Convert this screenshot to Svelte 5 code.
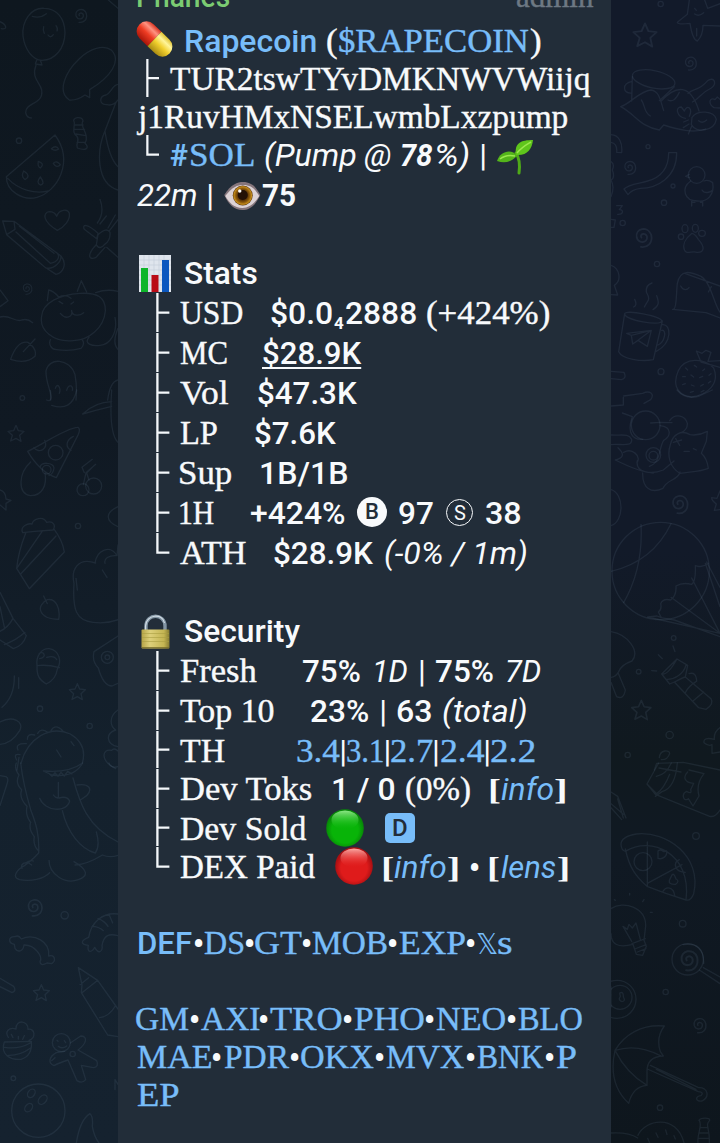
<script>
  const PANEL_LEFT = 118;
  const BASELINE = 31;

  const FACES = {
    sans: { font: '400 32px Roboto' },
    bold: { font: '500 32px Roboto' },
    heavy: { font: '700 32px Roboto' },
    ital: { font: 'italic 400 32px Roboto' },
    boldital: { font: 'italic 700 32px Roboto' },
    serif: { font: '400 33px "Liberation Serif"' },
    bracket: { font: '700 30px "Liberation Serif"' },
    sub: { font: '700 17px Roboto' },
    dot: { font: '400 28px Roboto' },
    math: { font: '400 29px "DejaVu Sans"' }
  };

  const ctx = document.createElement('canvas').getContext('2d');

  // t: text run between two ink edges, i: drawn icon box (top is relative to the baseline)
  const t = (face, text, x1, x2, tone = '') => ({ face, text, x1, x2, tone });
  const i = (icon, x1, x2, top, h) => ({ icon, x1, x2, top, h });
  const dot = (x1) => t('dot', '•', x1, x1 + 6.6);
  const tee = () => i('tee', 155.6, 169, -31, 39);
  const end = () => i('end', 155.6, 169, -31, 21);
  const L = 'link';

  const source = [
    [7, [t('bold', 'Phanes', 138, 230, 'name'), t('serif', 'admin', 517, 593, 'muted')]],
    [52, [i('pill', 136, 173, -31, 36), t('bold', 'Rapecoin', 186, 315.5, L), t('serif', '(', 327.5, 337), t('serif', '$RAPECOIN', 339, 529, L), t('serif', ')', 531, 540.5)]],
    [90, [i('tee', 146, 159, -31, 38), t('serif', 'TUR2tswTYvDMKNWVWiijq', 169.5, 589.5)]],
    [127.5, [t('serif', 'j1RuvHMxNSELwmbLxzpump', 136.5, 567.3)]],
    [166, [i('end', 146, 159, -31, 21), t('heavy', '#', 170, 188, L), t('serif', 'SOL', 191, 254, L), t('ital', '(Pump', 265, 355.3), t('ital', '@', 365, 390.7), t('boldital', '78', 401.3, 433), t('ital', '%)', 436.5, 468.7), t('sans', '|', 482, 484.5), i('sprout', 496, 534, -27, 35)]],
    [206, [t('ital', '22m', 136.6, 196), t('sans', '|', 209, 211.5), i('eye', 224, 260.5, -25, 30), t('heavy', '75', 262.5, 296.3)]],
    [284, [i('chart', 139, 171, -29, 37), t('bold', 'Stats', 185, 257.3)]],
    [324, [tee(), t('serif', 'USD', 180.3, 242.7), t('bold', '$0.0', 271.3, 332.3), t('sub', '4', 334, 344), t('bold', '2888', 345.7, 415.7), t('serif', '(+424%)', 427.3, 549.5)]],
    [364, [tee(), t('serif', 'MC', 179.7, 226.7), t('bold', '$28.9K', 263.3, 362.3, 'under')]],
    [404, [tee(), t('serif', 'Vol', 180.3, 228.7), t('bold', '$47.3K', 258.3, 357.8)]],
    [444, [tee(), t('serif', 'LP', 179.7, 217.3), t('bold', '$7.6K', 254.7, 336.3)]],
    [484, [tee(), t('serif', 'Sup', 179.7, 231.3), t('bold', '1B/1B', 260.7, 347)]],
    [524, [tee(), t('serif', '1H', 180.3, 214), t('bold', '+424%', 250.7, 344.7), i('buy', 357, 387, -27, 30), t('bold', '97', 399, 432.7), i('sell', 446.5, 473.5, -25, 27), t('bold', '38', 486.5, 521)]],
    [564, [end(), t('serif', 'ATH', 180.3, 246), t('bold', '$28.9K', 274.3, 374), t('ital', '(-0% / 1m)', 385.3, 526.3)]],
    [642, [i('lock', 140.5, 169.5, -27, 34), t('bold', 'Security', 185, 300.3)]],
    [682, [tee(), t('serif', 'Fresh', 179.7, 257), t('bold', '75%', 303, 360.3), t('ital', '1D', 375.3, 408), t('sans', '|', 420.8, 423.3), t('bold', '75%', 436.3, 493.7), t('ital', '7D', 507.3, 541.3)]],
    [722, [tee(), t('serif', 'Top 10', 179.7, 273.7), t('bold', '23%', 311, 368.7), t('sans', '|', 382, 384.5), t('bold', '63', 396.7, 431), t('ital', '(total)', 443, 525.7)]],
    [762, [i('tee', 155.6, 169, -31, 37), t('serif', 'TH', 179.7, 224), t('serif', '3.4', 297, 339.3, L), t('sans', '|', 342, 344.5), t('serif', '3.1', 347, 383, L), t('sans', '|', 386.3, 388.8), t('serif', '2.7', 391.3, 433, L), t('sans', '|', 434.8, 437.3), t('serif', '2.4', 440.7, 483.7, L), t('sans', '|', 486, 488.5), t('serif', '2.2', 491.3, 534.7, L)]],
    [800, [tee(), t('serif', 'Dev Toks', 180.3, 312.3), t('bold', '1 / 0', 333.3, 394.7), t('serif', '(0%)', 406.3, 470.3), t('bracket', '[', 490.7, 499.7), t('ital', 'info', 501.3, 553.7, L), t('bracket', ']', 555.7, 565.3)]],
    [840, [i('tee', 155.6, 169, -31, 37), t('serif', 'Dev Sold', 180.3, 307.3), i('green', 326, 364, -31.3, 38), i('dbadge', 385, 414.7, -27, 30)]],
    [878, [end(), t('serif', 'DEX Paid', 180.3, 315.7), i('red', 335.3, 373.3, -31.3, 38), t('bracket', '[', 383.7, 393), t('ital', 'info', 394.3, 446.3, L), t('bracket', ']', 448.7, 458), dot(471), t('bracket', '[', 490, 499), t('ital', 'lens', 501, 555.3, L), t('bracket', ']', 558, 567.3)]],
    [954, [t('bold', 'DEF', 138.7, 191.3, L), dot(195), t('serif', 'DS', 204, 243.7, L), dot(246), t('serif', 'GT', 254.7, 301.3, L), dot(302.8), t('serif', 'MOB', 312.3, 387.3, L), dot(389.7), t('serif', 'EXP', 399, 465.7, L), dot(467.7), t('math', '𝕏', 477, 497, L), t('serif', 's', 498, 511.3, L)]],
    [1030, [t('serif', 'GM', 136.3, 189, L), dot(191.7), t('serif', 'AXI', 201.3, 259.7, L), dot(260.7), t('serif', 'TRO', 270.3, 342, L), dot(344.7), t('serif', 'PHO', 354, 424, L), dot(426.7), t('serif', 'NEO', 436.3, 505.7, L), dot(508.7), t('serif', 'BLO', 518, 582, L)]],
    [1068, [t('serif', 'MAE', 137, 211.3, L), dot(213.7), t('serif', 'PDR', 223.7, 288.7, L), dot(291.7), t('serif', 'OKX', 300.7, 373.7, L), dot(376.7), t('serif', 'MVX', 386.3, 464.7, L), dot(467.7), t('serif', 'BNK', 477.3, 544, L), dot(546.7), t('serif', 'P', 555.7, 576.3, L)]],
    [1106, [t('serif', 'EP', 137, 179.3, L)]]
  ];

  function place(items) {
    let cursor = PANEL_LEFT;
    return items.map((item) => {
      if (item.icon) {
        const gap = item.x1 - cursor;
        cursor = item.x2;
        return { ...item, gap };
      }
      ctx.font = FACES[item.face].font;
      const m = ctx.measureText(item.text);
      const ink = m.actualBoundingBoxLeft + m.actualBoundingBoxRight;
      const fixed = item.face === 'dot' || item.text === '|';
      const scale = fixed ? 1 : Math.min(1.5, Math.max(0.85, (item.x2 - item.x1) / ink));
      const spare = item.x2 - item.x1 - ink * scale;
      const origin = item.x1 + m.actualBoundingBoxLeft * scale + spare / 2;
      const gap = origin - cursor;
      cursor = origin + m.width;
      return { ...item, scale, gap, w: m.width };
    });
  }

  const rows = source.map(([base, items], k) => ({
    h: k + 1 < source.length ? source[k + 1][0] - base : 50,
    items: place(items)
  }));

  const star = 'M0-24 L7-8 24-6 11 6 15 24 0 15 -16 23 -11 6 -24-6 -7-8Z';
  const swirl = 'M-2 2c-5-8 10-12 12-2c2 14-18 16-22 2c-4-20 24-26 31-6c4 18-8 28-22 26';
</script>

{#snippet art(name)}
  {#if name === 'tee'}
    <svg viewBox="0 0 13.4 39" preserveAspectRatio="none"><path d="M1.4 0V39M1.4 19.6H13.4" fill="none" stroke="#f4f7fa" stroke-width="2.3" /></svg>
  {:else if name === 'end'}
    <svg viewBox="0 0 13.4 21" preserveAspectRatio="none"><path d="M1.4 0V19.6H13.4" fill="none" stroke="#f4f7fa" stroke-width="2.3" /></svg>
  {:else if name === 'pill'}
    <svg viewBox="0 0 37 36">
      <defs>
        <linearGradient id="pr" x1="0" y1="1" x2="0" y2="0"><stop offset="0" stop-color="#a81509" /><stop offset=".45" stop-color="#ee3c23" /><stop offset=".75" stop-color="#ff9382" /><stop offset="1" stop-color="#d93421" /></linearGradient>
        <linearGradient id="py" x1="0" y1="1" x2="0" y2="0"><stop offset="0" stop-color="#a98b12" /><stop offset=".45" stop-color="#f1cf2d" /><stop offset=".75" stop-color="#fff59a" /><stop offset="1" stop-color="#dec02e" /></linearGradient>
      </defs>
      <g transform="translate(18.5 18) rotate(44)">
        <path d="M0-10H-11A10 10 0 0 0-11 10H0Z" fill="url(#pr)" />
        <path d="M0-10H11A10 10 0 0 1 11 10H0Z" fill="url(#py)" />
      </g>
    </svg>
  {:else if name === 'sprout'}
    <svg viewBox="0 0 38 35">
      <path d="M20 14c4 6 4 13 3 20" fill="none" stroke="#4faa18" stroke-width="3" stroke-linecap="round" />
      <path d="M20 16C18 4 25 1 37 1C36 10 31 17 20 16Z" fill="#5fc51c" />
      <path d="M21 17C16 9 4 12 1 22C10 25 16 22 21 17Z" fill="#54b51b" />
      <path d="M21 14C26 8 30 6 35 3M4 20C9 16 14 16 19 17" fill="none" stroke="#9be84e" stroke-width="1.5" />
    </svg>
  {:else if name === 'eye'}
    <svg viewBox="0 0 36 30">
      <defs><radialGradient id="iris"><stop offset=".35" stop-color="#3b1c06" /><stop offset=".7" stop-color="#8d5a0b" /><stop offset=".88" stop-color="#c28a1b" /><stop offset="1" stop-color="#4e2c09" /></radialGradient></defs>
      <path d="M0 14C7 3 13 1 19 1C27 1 32 6 36 14C31 25 25 29 18 29C10 29 4 23 0 14Z" fill="#85757b" />
      <path d="M1 15C8 6 13 4 19 4C27 4 31 8 35 15C30 23 25 27 18 27C10 27 5 22 1 15Z" fill="#dcd2d5" />
      <circle cx="18.5" cy="14.5" r="10" fill="url(#iris)" />
      <circle cx="18.5" cy="14" r="5" fill="#241006" />
      <circle cx="15.5" cy="10" r="1.7" fill="#fff" />
    </svg>
  {:else if name === 'chart'}
    <svg viewBox="0 0 32 37">
      <path d="M0 0H32V37H0Z" fill="#dfe5ed" />
      <path d="M0 5H32M0 10H32M0 15H32M0 20H32M0 25H32M0 30H32M5 0V37M10 0V37M15 0V37M20 0V37M25 0V37" stroke="#c5cfdb" stroke-width=".7" />
      <path d="M2 13H9V37H2Z" fill="#0db52a" /><path d="M12.5 20H19.5V37H12.5Z" fill="#b90a16" /><path d="M23 5H30V37H23Z" fill="#0b57bf" />
    </svg>
  {:else if name === 'lock'}
    <svg viewBox="0 0 29 34">
      <defs><linearGradient id="brass"><stop offset="0" stop-color="#b6a447" /><stop offset=".3" stop-color="#ddd07a" /><stop offset=".8" stop-color="#c4b552" /><stop offset="1" stop-color="#867b31" /></linearGradient></defs>
      <path d="M5 16V11C5-2 24-2 24 11V16" fill="none" stroke="#8294a3" stroke-width="3.4" />
      <path d="M4.5 15V11C5-1 22-2 23.5 8" fill="none" stroke="#d1dce4" stroke-width="1.2" />
      <rect x=".5" y="14.5" width="28" height="19" rx="1" fill="url(#brass)" />
      <path d="M1 18.5H28M1 22.5H28M1 26.5H28" stroke="#aa9d42" stroke-width=".6" /><path d="M1 32.8H28" stroke="#766c2b" stroke-width="1.2" />
    </svg>
  {:else if name === 'green' || name === 'red'}
    {@const g = name === 'green'}
    <svg viewBox="0 0 38 38">
      <defs>
        <radialGradient id="ball-{name}" cx=".5" cy=".55" r=".5"><stop offset=".7" stop-color={g ? '#08b408' : '#df1b1b'} /><stop offset="1" stop-color={g ? '#078907' : '#a90f12'} /></radialGradient>
        <linearGradient id="shine-{name}" x1="0" y1="0" x2="0" y2="1"><stop offset="0" stop-color={g ? '#8ce985' : '#ffaaa5'} /><stop offset="1" stop-color={g ? '#10b810' : '#e32222'} stop-opacity="0" /></linearGradient>
      </defs>
      <circle cx="19" cy="19" r="18.8" fill="url(#ball-{name})" /><ellipse cx="19" cy="11" rx="13.5" ry="9.5" fill="url(#shine-{name})" />
    </svg>
  {:else if name === 'buy'}
    <span class="badge buy">B</span>
  {:else if name === 'sell'}
    <span class="badge sell">S</span>
  {:else}
    <span class="badge dev">D</span>
  {/if}
{/snippet}

<main>
  <aside class="left">
    <svg viewBox="0 0 354 3429" class="doodles">
      <path d="M133 25C92 22 65 64 69 108C74 147 96 179 126 181C166 180 194 145 195 98C194 56 172 26 133 25ZM97 49Q120 56 139 41M131 80Q128 90 133 100M168 77Q175 86 171 93M144 105Q151 116 160 104M110 181L106 192 126 195 121 181M108 196C93 235 120 246 125 270C132 315 75 306 77 338Q80 354 94 354" />
      <path transform="translate(240 45)" d={swirl} /><path d="M208 300C170 275 196 215 238 176C270 146 310 132 335 151C365 183 332 231 269 269V293L255 285Q230 302 208 300ZM354 253C336 255 335 278 318 285C297 289 296 315 321 314Q340 319 354 300M348 307L315 392C290 450 287 550 354 570M315 394C322 440 334 481 354 500M0 65C18 72 25 90 4 86M325 0L354 25" />
      <path d="M223 367C212 352 249 346 249 363C236 378 271 402 255 430C270 444 258 454 232 444C225 430 241 424 231 409C215 399 224 383 223 367M224 375H249M224 388H254M228 402L257 407M231 427H256" />
      <path d="M165 405L19 530C19 574 69 603 111 592C171 576 224 486 165 405ZM23 535C54 568 103 583 145 573M154 446Q168 434 176 447Q165 455 154 446M115 484Q136 491 121 504Q112 500 115 484M160 490Q170 480 181 494Q169 506 160 490M71 513Q95 528 75 539Q62 530 71 513M121 531Q137 552 121 555Q107 548 121 531" />
      <circle cx="57" cy="422" r="8" /><path d="M172 691C128 665 127 638 148 635Q164 635 170 649C177 628 203 625 208 640C211 660 193 682 172 691Z" />
      <path d="M8 663L42 664 183 768C205 795 185 821 168 823L134 801 20 704ZM42 664L45 688 20 704M58 679L162 760M48 696L151 790M151 790C175 787 182 768 169 757M138 804C163 809 186 783 182 768" />
      <path d="M300 598Q315 639 292 669M319 648L300 672M346 645L324 684M294 700C263 670 245 672 253 688L290 716ZM288 735C259 766 267 782 288 772L315 742M294 704Q320 680 330 697Q332 721 314 733Q300 751 289 735ZM329 691L354 659M320 742L354 772" />
      <path transform="translate(80 865) scale(.8)" d={swirl} /><path d="M0 870L24 902 0 920M0 951C28 942 47 969 65 960Q83 955 98 968M142 902L146 870Q160 872 176 891C191 884 202 886 213 895M232 874L244 842 260 876M125 948C129 908 178 884 240 880C294 877 317 893 316 933C312 982 268 1021 220 1022C159 1028 117 990 125 948ZM287 878Q320 866 354 874M177 904L188 911M213 912L221 906M181 940C197 960 219 952 215 931M215 935C219 947 238 949 251 938M151 1019C145 1033 154 1048 169 1049Q209 1055 243 1045Q256 1031 247 1020M267 1012C250 1031 276 1039 300 1036C329 1035 354 1000 345 952M354 985Q335 1030 354 1048" />
      <path d="M32 1078Q51 1022 84 1027Q112 1046 105 1069Q77 1094 32 1078ZM70 1055L105 1017M152 1200C158 1178 137 1153 138 1113C146 1071 209 1074 225 1124Q232 1162 228 1200M166 1165C172 1145 184 1164 178 1180M200 1171C206 1150 221 1157 217 1171M323 1200Q330 1145 354 1140" />
      <g transform="translate(0 1170)">
        <path transform="translate(48 130)" d={star} /><circle cx="67" cy="24" r="7" /><path d="M140 30Q158 40 151 1M155 46Q216 66 230 0M248 72Q289 60 335 49M248 72Q286 36 335 35M335 0Q326 130 354 157" />
        <path d="M83 184C125 165 202 111 234 112Q242 118 235 133L169 263Q119 245 83 184ZM92 216C56 249 51 309 91 317C129 317 141 283 135 249M101 173C118 193 146 176 134 151M220 139C198 150 195 171 213 181M121 232C120 215 160 216 162 234Q160 251 147 257" /><circle cx="167" cy="188" r="22" /><circle cx="140" cy="239" r="13" />
        <circle cx="249" cy="299" r="18" /><circle cx="281" cy="288" r="24" /><path d="M250 284L258 248 287 223M253 248L246 232 277 208M277 232L260 249 267 270M0 300Q17 304 18 327L33 331 18 340V360L0 345" />
        <path d="M68 428C59 408 85 399 96 402C100 385 130 377 140 397C161 391 168 407 159 420L104 424ZM77 430Q55 485 50 535L88 596L193 486Q188 452 161 416M50 535L128 422M62 552L168 438" />
        <circle cx="234" cy="408" r="8" /><path d="M354 350C316 367 314 392 354 410M287 519C232 501 213 540 222 580C217 661 229 692 279 697Q320 702 354 689M285 519C291 479 331 463 351 497C326 495 311 506 315 520M307 540L321 562M351 497L354 465M228 565L232 600" />
        <path d="M131 618L142 641M176 688C182 656 168 624 142 629C108 645 113 687 176 688ZM0 607L39 685 79 737Q69 768 40 776L0 750M0 650L14 716M0 724Q25 712 39 685M13 764Q50 750 75 727" />
        <path d="M111 827C107 796 126 774 148 776C180 782 185 815 172 837Q168 868 139 882C118 870 110 857 111 827ZM111 827Q141 823 178 833M117 792C128 779 145 801 119 806M140 802Q163 795 170 809" />
        <path transform="translate(232 905)" d={star} /><circle cx="120" cy="956" r="8" /><circle cx="269" cy="1008" r="8" /><circle cx="322" cy="802" r="18" /><circle cx="322" cy="802" r="7" />
        <path d="M354 738L282 785Q275 815 295 834Q310 888 336 888L354 880M43 858Q44 920 6 952M56 863V895M0 996C38 976 74 994 59 1022Q35 1061 0 1063M354 960C328 977 328 1007 347 1020C315 1031 319 1063 354 1070M347 1136C300 1112 305 1075 335 1081Q342 1072 354 1083" />
        <path d="M63 1120C83 1043 151 1005 211 1032Q263 1063 247 1119M82 1048Q82 1029 104 1035M113 1030Q123 1012 143 1027M153 1022Q166 999 188 1022M54 1080Q44 1059 79 1061M50 1110Q39 1089 60 1094M170 1080L183 1101M213 1055L222 1067M51 1140L57 1102" />
      </g>
      <g transform="translate(0 2289)">
        <path d="M62 0Q69 61 92 140C102 169 119 203 116 270Q92 297 58 318Q34 343 59 350C93 356 131 348 149 329M49 0Q42 15 57 36Q44 60 65 80Q56 105 81 130Q75 155 92 178Q85 199 103 221Q98 245 115 263M66 316C60 303 78 291 95 306M76 300Q90 290 100 294M147 292C147 335 197 365 235 350C270 338 259 318 222 296M248 0Q223 45 156 36L130 24Q205 31 248 0M146 31L156 40 165 29 174 40 183 28 193 39 203 25 216 33M175 58V103M119 106C134 145 200 151 209 114Q201 98 177 105M160 96Q165 104 174 105M219 45C239 120 261 191 354 237M187 143C202 207 241 258 286 270Q301 249 289 207M231 66C266 60 280 77 260 98L241 111M225 306Q262 304 307 276Q329 285 354 277M327 0Q333 17 354 11M0 38L18 41Q28 45 20 66L0 128" />
        <path transform="translate(101 431) scale(1.25)" d={swirl} /><circle cx="194" cy="457" r="11" />
        <path d="M43 544C23 540 25 519 45 521Q56 515 64 528C103 510 151 536 146 579C165 573 169 593 155 602L141 600Q121 611 120 596C129 584 107 545 72 546C70 565 53 570 45 556Z" />
        <path d="M354 453C306 447 273 480 266 523C240 533 242 545 265 547C260 572 277 568 284 553C297 576 309 565 306 548C311 518 326 510 354 518M276 490Q296 490 310 503M294 466Q315 475 324 490M327 454L338 480" />
        <path transform="translate(124 689)" d={star} /><path d="M0 646L41 670Q50 684 36 689L0 671M235 614L246 666 244 689 323 816 354 821M235 614L293 652 354 738M240 665L266 644M246 689L293 652M299 764Q327 761 346 729" />
        <path d="M25 823C13 805 27 792 48 798C47 768 86 772 84 799C105 795 109 824 87 832M13 837C0 875 31 891 63 889Q98 878 94 835ZM14 853Q55 860 91 840M24 877Q60 878 93 854M34 814L39 824M55 820V828M73 818L68 829" />
        <circle cx="184" cy="839" r="27" /><circle cx="218" cy="873" r="8" /><path d="M211 840L242 819C264 819 261 841 234 861L290 893Q298 911 280 914L244 907 257 950Q246 963 231 953L204 891Q176 900 162 908C144 901 146 882 169 869L194 865M171 832L174 835M193 833L197 839M175 850Q188 859 200 849M155 893L165 884" />
        <circle cx="40" cy="946" r="7" /><circle cx="115" cy="1043" r="80" /><ellipse cx="94" cy="991" rx="10" ry="14" transform="rotate(35 94 991)" /><ellipse cx="128" cy="1010" rx="11" ry="16" transform="rotate(40 128 1010)" /><ellipse cx="86" cy="1034" rx="10" ry="14" transform="rotate(40 86 1034)" />
        <path d="M229 1140Q240 1070 270 1052Q280 1060 277 1090Q282 1120 297 1140M345 950L354 964M345 950V980" />
      </g>
    </svg>
  </aside>

  <article>
    {#each rows as row}
      <div class="row" style="height:{row.h}px">
        {#each row.items as item}
          {#if item.icon}
            <span class="icon" style="margin-left:{item.gap}px;margin-top:{BASELINE + item.top}px;width:{item.x2 - item.x1}px;height:{item.h}px">{@render art(item.icon)}</span>
          {:else}
            <span class="run {item.face} {item.tone}" style="margin-left:{item.gap}px;width:{item.w}px;--stretch:{item.scale}">{item.text}</span>
          {/if}
        {/each}
      </div>
    {/each}
  </article>

  <aside class="right">
    <svg viewBox="0 0 327 3429" class="doodles">
      <circle cx="149" cy="12" r="8" /><path transform="translate(102 105) scale(1.45)" d={star} /><path d="M235 0L229 43 199 67Q200 74 237 70Q244 118 259 123Q276 107 276 76L327 78M281 0L290 25 327 11M251 25L256 31M251 42Q264 51 278 38M257 85V108" />
      <path transform="translate(236 188)" d={swirl} /><ellipse cx="128" cy="238" rx="65" ry="26" transform="rotate(12 128 238)" /><path d="M64 230L62 303M190 260L145 302M64 244C31 250 35 282 62 279M29 320C57 312 87 272 120 270C145 273 148 301 158 332M29 320C76 345 84 378 145 390L158 375C200 388 248 401 284 387M150 304C196 253 239 252 264 333M91 300C103 315 97 336 118 348M171 300Q190 310 205 277M231 281C246 263 262 276 290 242C311 228 318 252 301 264C270 278 263 298 244 306" />
      <path d="M243 352C260 329 309 332 316 358C310 393 255 401 241 374ZM223 355C196 350 192 320 211 321L220 333C229 311 246 325 235 349M232 360L218 366M234 372L217 383M242 379L232 402M263 362Q274 372 287 360M309 323C290 310 296 290 312 299L319 291 327 298M309 323L327 324" />
      <circle cx="111" cy="440" r="6" /><circle cx="159" cy="608" r="8" /><circle cx="186" cy="558" r="6" /><path transform="translate(54 501)" d={swirl} /><path d="M173 458H197C198 534 136 565 88 565Q61 569 51 584L39 567C53 552 84 551 110 543Q173 525 173 458M0 404C25 405 35 430 32 458L17 457Q20 431 0 427M0 485Q12 492 4 510Q13 533 0 540Q12 560 0 590" />
      <circle cx="257" cy="525" r="25" /><path d="M235 523L224 529 236 533M239 543C209 565 220 603 259 603C291 607 311 582 305 548Q291 538 279 543M273 570C280 582 298 578 305 570M242 604V618M275 604V618M242 607H252M275 607H268" />
      <path transform="translate(94 710) scale(1.4)" d={swirl} /><path d="M243 700C225 714 214 733 220 749C226 766 243 751 258 757C281 758 282 740 262 718Q253 702 243 700Z" /><ellipse cx="222" cy="686" rx="9" ry="12" /><ellipse cx="253" cy="685" rx="9" ry="12" /><ellipse cx="273" cy="700" rx="10" ry="9" /><ellipse cx="210" cy="710" rx="8" ry="8" />
      <circle cx="35" cy="669" r="8" /><circle cx="138" cy="792" r="8" /><circle cx="150" cy="1115" r="9" /><path d="M17 617H34L25 629C38 627 39 644 20 643M0 658L13 660 9 682H0M0 796C26 804 33 842 10 856L20 885 0 884M188 928C198 923 195 882 199 850C208 806 238 815 270 829C300 847 310 916 327 936M185 928L285 938 327 954M209 858C217 874 230 869 234 863M301 860L292 876M221 820L327 858" />
      <path d="M41 941L23 1055C33 1077 91 1086 127 1079L154 963M41 941C41 928 152 948 152 963C151 980 41 960 41 941ZM153 974C182 970 185 1028 136 1054M152 991C168 987 162 1026 141 1035M47 1000L121 991 109 1039 81 1021 65 1032 61 1006ZM61 1006L121 991 81 1021M100 921C111 898 120 902 106 876Q104 855 123 849M126 929C144 917 145 908 137 887M68 921Q80 915 71 898" />
      <path d="M202 1112C222 1072 279 1073 308 1104C327 1150 292 1184 241 1191C188 1184 188 1142 202 1112ZM270 1086L256 1053 273 1060 285 1051 300 1057 291 1084 327 1082M270 1086L327 1102M0 1114L39 1117Q48 1135 31 1139L0 1136" /><path d="M224 1104L230 1110M250 1096L257 1101M281 1107L275 1112M215 1130H223M240 1125L248 1131M266 1133L275 1129M294 1126L300 1121M215 1154L223 1151M241 1155L249 1158M269 1158L277 1153M292 1149L299 1144M238 1177L247 1174M270 1176L279 1171" />
      <g transform="translate(0 1170)">
        <path d="M37 22V45L0 48M38 18L95 10C116 0 132 11 119 29L99 40M198 0Q224 31 265 18L304 0M0 135C33 137 52 129 62 148C64 173 26 160 0 164M21 173Q51 201 13 210M13 210C61 234 97 248 127 249M38 187C63 173 91 197 78 218M79 212C72 247 120 255 157 240L189 213M147 107C186 111 178 141 158 151C143 173 151 217 115 229M95 249C94 294 120 312 156 295C168 267 201 272 207 246M176 92C193 68 223 77 229 100Q230 119 210 128M178 164C185 132 211 119 237 134Q263 138 289 124L286 154 271 190Q288 205 292 235C269 245 239 245 207 250C177 233 167 196 178 164M34 69L64 80C46 130 67 151 95 148M119 99L147 97 183 98M187 157L212 150M194 146L206 166M219 184H235M247 176L256 180" /><circle cx="104" cy="106" r="43" /><circle cx="127" cy="195" r="22" /><circle cx="127" cy="197" r="13" />
        <path transform="translate(203 340) scale(1.35)" d={swirl} /><path d="M327 303L318 325 302 323Q301 330 316 342L310 361 327 359M0 299C40 310 40 394 0 407" />
        <circle cx="149" cy="543" r="146" /><path d="M90 403Q97 535 38 638M0 544Q126 514 180 401M292 520C269 538 259 526 253 527Q255 574 242 583Q215 576 195 588Q197 617 179 630Q156 624 149 641Q153 659 142 666L151 683 138 678 110 681 327 730M149 683L190 690 327 740M180 622L327 730M242 564L327 730M283 520L327 650M287 516L327 592" />
        <path d="M0 725C50 733 88 784 63 813Q30 824 21 848Q14 861 0 862M21 848L43 900Q38 930 17 920L0 877" /><circle cx="188" cy="744" r="7" /><circle cx="83" cy="845" r="7" /><path d="M186 768L192 785M142 794L154 806M122 842L137 843M152 852L198 807 230 826 223 861 300 926Q310 942 285 958L263 953 190 876 176 882ZM152 852Q170 857 198 807M165 868C190 870 218 852 225 825M191 876Q219 861 223 861M234 851Q256 844 257 874M223 908Q232 889 255 875M246 933L278 906" />
        <path transform="translate(91 960) scale(1.2)" d={star} /><circle cx="176" cy="1035" r="11" /><circle cx="50" cy="1095" r="8" /><path d="M327 1013Q308 1026 310 1048Q276 1040 279 1058Q293 1070 303 1064V1090L327 1086M145 1103C147 1078 176 1079 176 1090Q170 1110 151 1109M137 1120L217 1117 327 1140M137 1120L130 1140" />
      </g>
      <g transform="translate(0 2289)">
        <path d="M143 0L108 63 133 94 296 160Q312 164 327 141M108 63L137 92Q159 77 176 34M181 0Q165 35 136 40M144 15L210 27M199 0Q193 75 153 86L133 100M234 21L279 32Q254 63 264 99L246 129 232 107C217 119 210 92 227 85Q244 95 239 80L248 61C220 60 215 41 230 27M0 87L20 100 45 165M20 108L37 165M0 134L32 170M0 122L37 154" />
        <path d="M30 244Q30 221 76 213C167 203 274 280 248 392Q239 415 225 411M30 244Q31 263 43 265C120 217 243 271 225 411M43 258C55 315 75 341 108 370Q164 392 225 411M109 237V370M109 361L213 305M156 385C165 368 188 372 191 397M205 290C185 299 191 327 223 328M141 264C154 253 156 274 166 263C171 279 154 291 141 286ZM182 338Q188 326 195 348Q207 354 194 364Q172 365 175 352Z" /><circle cx="96" cy="296" r="27" /><circle cx="255" cy="219" r="10" /><circle cx="215" cy="482" r="10" />
        <path d="M0 437C37 412 105 432 104 489L99 532 106 550 95 577 76 574 66 544Q0 561 0 512M63 542L103 527M71 558L105 545M79 567L105 557M62 535L36 490 49 499 54 484 64 495 75 480 88 529M56 391V396M99 410L95 416M118 448H124M10 410L13 412" />
        <circle cx="230" cy="589" r="47" /><path transform="translate(230 589) scale(1.5)" d={swirl} /><path d="M265 621L327 662M277 614L327 642M216 545Q280 535 278 602" /><circle cx="164" cy="687" r="8" /><circle cx="18" cy="709" r="57" /><circle cx="27" cy="703" r="36" /><path d="M26 690Q38 684 37 702Q45 714 33 716Q20 711 28 700ZM0 672V732" /><path transform="translate(263 785) scale(1.1)" d={swirl} />
        <path d="M12 862C41 813 93 783 160 789Q134 823 148 866L157 879Q108 881 108 925V967Q66 970 53 1021C10 981-2 925 12 862ZM12 862Q78 841 148 878M12 862Q46 930 108 967M118 907L263 974C291 973 297 1002 273 1014C252 1017 252 999 270 998Q280 987 262 986L109 918M136 919L255 979" />
        <circle cx="147" cy="1034" r="8" /><path d="M81 1117C101 1070 197 1051 219 1140M0 1110Q53 1107 80 1125M110 1126L116 1140M135 1110L141 1123M164 1101L168 1115M189 1118L193 1128M264 1072C268 1064 298 1063 296 1072C281 1088 297 1092 295 1140M264 1072C277 1085 257 1113 261 1140M268 1094H290M264 1110H293M262 1126H294" />
      </g>
    </svg>
  </aside>
</main>

<style>
  :global(body) { margin: 0; background: #101923; overflow: hidden; }
  main { display: grid; grid-template-columns: 118px 493px 109px; width: 720px; height: 1143px; overflow: hidden; color: #f8fafc; }
  aside { overflow: hidden; height: 1143px; }
  .left { background: linear-gradient(#0e171f 0, #101923 38%, #14212d 68%, #15222f 100%); }
  .right { background: linear-gradient(#121a2a 0, #121a29 48%, #10191f 66%, #101923 75%, #0e161d 100%); }
  .doodles { display: block; width: 100%; height: 1143px; fill: none; stroke: rgb(135 165 195 / .11); stroke-width: 4; stroke-linecap: round; stroke-linejoin: round; }
  article { background: #222d39; height: 1143px; margin-top: -24px; padding-bottom: 24px; overflow: visible; }
  .row { display: flex; align-items: baseline; line-height: 40px; white-space: pre; }
  .row::before { content: '\200b'; width: 0; font: 400 32px/40px Roboto, sans-serif; }
  .run { flex: none; font: 400 32px/40px Roboto, sans-serif; transform: scaleX(var(--stretch)); transform-origin: 0 50%; }
  .icon { flex: none; align-self: flex-start; display: block; }
  .icon svg { display: block; width: 100%; height: 100%; overflow: visible; }
  .run.bold { font-weight: 500; }
  .run.heavy { font-weight: 700; }
  .run.ital { font-style: italic; }
  .run.boldital { font-style: italic; font-weight: 700; }
  .run.serif { font-family: 'Liberation Serif', serif; font-size: 33px; -webkit-text-stroke: .4px currentColor; }
  .run.bracket { font-family: 'Liberation Serif', serif; font-size: 30px; font-weight: 700; }
  .run.sub { font-size: 17px; font-weight: 700; position: relative; top: 5px; }
  .run.dot { font-size: 28px; transform: scale(1.3); transform-origin: 50% 50%; }
  .run.math { font-family: 'DejaVu Sans', sans-serif; font-size: 29px; }
  .link { color: #78bdf9; }
  .name { color: #7bcb72; }
  .muted { color: #6d7883; }
  .under { text-decoration: underline; text-decoration-thickness: 1.5px; text-underline-offset: 3px; }
  .badge { display: flex; align-items: center; justify-content: center; box-sizing: border-box; width: 100%; height: 100%; font: 500 22px/1 Roboto, sans-serif; }
  .buy { border-radius: 50%; background: #f8fafc; color: #222d39; }
  .sell { border-radius: 50%; border: 1.8px solid #f8fafc; font-size: 20px; font-weight: 400; }
  .dev { border-radius: 5px; background: #78bdf9; color: #222d39; font-size: 24px; }
</style>
